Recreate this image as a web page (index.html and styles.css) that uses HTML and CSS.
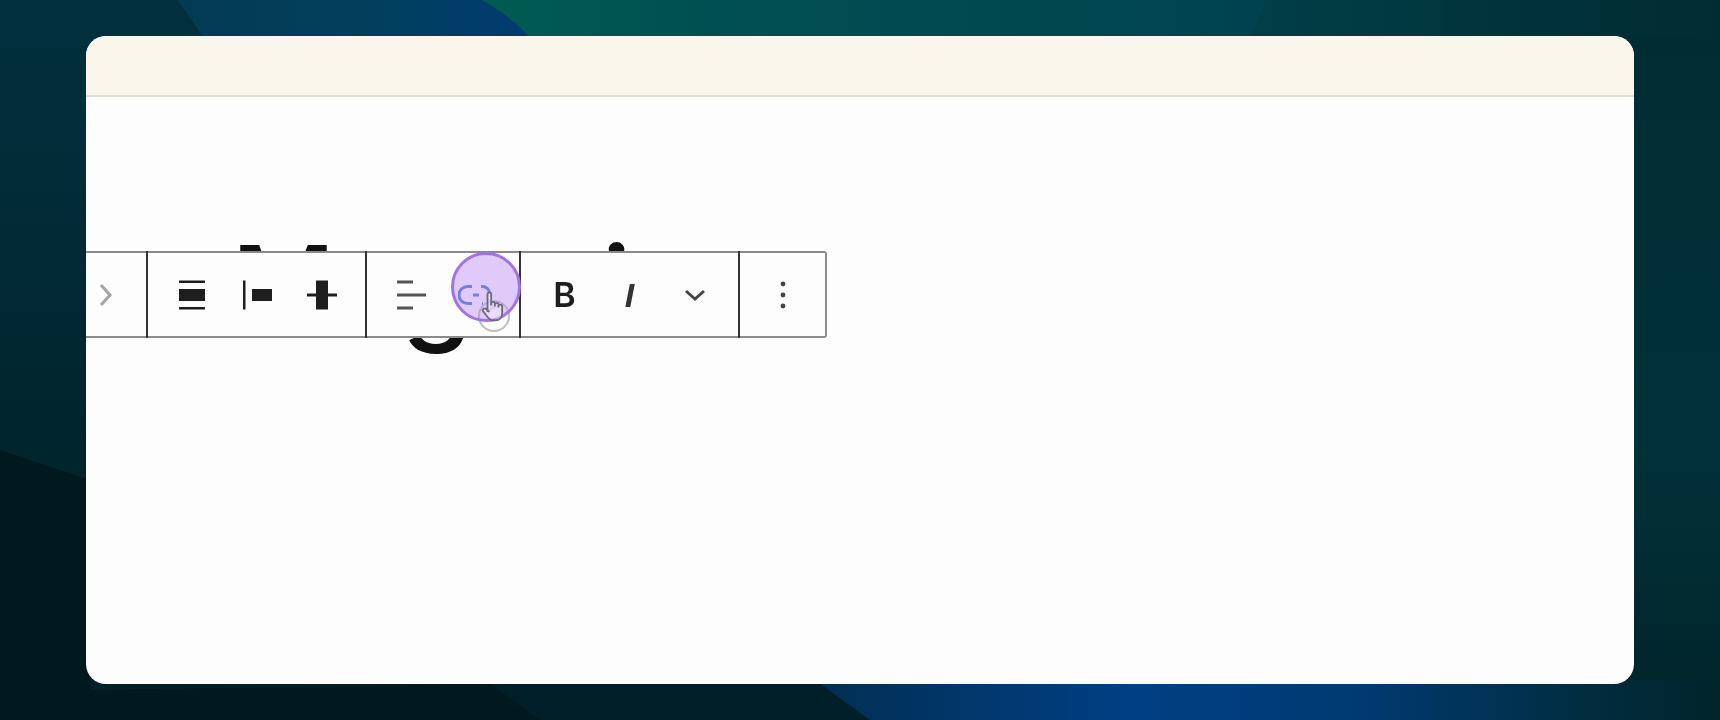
FILE: index.html
```html
<!DOCTYPE html>
<html lang="en">
<head>
    <meta charset="UTF-8">
    <meta name="viewport" content="width=device-width, initial-scale=1.0">
    <title>Block editor toolbar</title>
    <link rel="stylesheet" href="styles.css">
</head>
<body>
    <svg class="backdrop" viewBox="0 0 1720 720" aria-hidden="true">
        <defs>
            <linearGradient id="bg-base" x1="0" y1="0" x2="0" y2="1">
                <stop offset="0" stop-color="#02303e"/>
                <stop offset="0.6" stop-color="#01252e"/>
                <stop offset="1" stop-color="#011f26"/>
            </linearGradient>
            <linearGradient id="bg-blue-top" x1="0" y1="0" x2="1" y2="0">
                <stop offset="0" stop-color="#033a52"/>
                <stop offset="0.6" stop-color="#02405f"/>
                <stop offset="1" stop-color="#003a72"/>
            </linearGradient>
            <linearGradient id="bg-green-top" x1="0" y1="0" x2="1" y2="0">
                <stop offset="0" stop-color="#005c52"/>
                <stop offset="0.3" stop-color="#004f52"/>
                <stop offset="0.8" stop-color="#004650"/>
                <stop offset="1" stop-color="#00434e"/>
            </linearGradient>
            <linearGradient id="bg-right-top" x1="0" y1="0" x2="1" y2="0">
                <stop offset="0" stop-color="#013e48"/>
                <stop offset="0.4" stop-color="#013840"/>
                <stop offset="0.41" stop-color="#01353d"/>
                <stop offset="1" stop-color="#012c33"/>
            </linearGradient>
            <linearGradient id="bg-right" x1="0" y1="0" x2="0" y2="1">
                <stop offset="0" stop-color="#012c33"/>
                <stop offset="0.6" stop-color="#023139"/>
                <stop offset="1" stop-color="#01242a"/>
            </linearGradient>
            <linearGradient id="bg-blue-bottom" x1="0" y1="0" x2="1" y2="0">
                <stop offset="0" stop-color="#022f52"/>
                <stop offset="0.35" stop-color="#003f84"/>
                <stop offset="0.6" stop-color="#003a72"/>
                <stop offset="0.85" stop-color="#012d40"/>
                <stop offset="1" stop-color="#01242a"/>
            </linearGradient>
        </defs>
        <rect width="1720" height="720" fill="url(#bg-base)"/>
        <polygon points="178,0 530,0 530,40 205,40" fill="url(#bg-blue-top)"/>
        <path d="M482 0 C500 10 520 25 532 40 L1250 40 L1266 0 Z" fill="url(#bg-green-top)"/>
        <polygon points="1266,0 1720,0 1720,40 1250,40" fill="url(#bg-right-top)"/>
        <rect x="1630" y="36" width="90" height="684" fill="url(#bg-right)"/>
        <polygon points="0,450 90,480 90,690 491,684 540,720 0,720" fill="#00191e"/>
        <polygon points="491,680 815,680 870,720 540,720" fill="#001f28"/>
        <polygon points="815,680 1720,680 1720,720 870,720" fill="url(#bg-blue-bottom)"/>
    </svg>

    <main class="window">
        <div class="topbar"></div>
        <div class="canvas">
            <h1 class="title">Magazine</h1>

            <div class="toolbar">
                <div class="group group-nav">
                    <button class="tool" type="button">
                        <svg class="icon" viewBox="0 0 30 30"><path class="stroke-light" d="M10 5l9 10-9 10"/></svg>
                    </button>
                </div>
                <div class="group">
                    <button class="tool" type="button">
                        <svg class="icon" viewBox="0 0 30 30"><path d="M2 .5h26V3H2zM2 9h26v12H2zM2 27h26v2.500H2z"/></svg>
                    </button>
                    <button class="tool" type="button">
                        <svg class="icon" viewBox="0 0 30 30"><path d="M1 .5h2.500v29H1zM10 9h20v12H10z"/></svg>
                    </button>
                    <button class="tool" type="button">
                        <svg class="icon" viewBox="0 0 30 30"><path d="M9 .5h12V13.500h9v3h-9v13H9v-13H0v-3h9z"/></svg>
                    </button>
                </div>
                <div class="group">
                    <button class="tool" type="button">
                        <svg class="icon icon-soft" viewBox="0 0 30 30"><path d="M1 .5h16v3H1zM1 13.500h29v3H1zM1 26.500h16v3H1z"/></svg>
                    </button>
                    <button class="tool" type="button">
                        <svg class="icon" viewBox="0 0 36 30"><path class="stroke-link" d="M14 6.500H9.500a8.500 8.500 0 0 0 0 17H14M15 15h6M23 6.500h1.500a7 7 0 0 1 7 7M24 23.500h1"/></svg>
                    </button>
                </div>
                <div class="group">
                    <button class="tool tool-text tool-bold" type="button">B</button>
                    <button class="tool tool-text tool-italic" type="button">I</button>
                    <button class="tool" type="button">
                        <svg class="icon" viewBox="0 0 30 30"><path class="stroke-dark" d="M6 11l9 8 9-8"/></svg>
                    </button>
                </div>
                <div class="group group-end">
                    <button class="tool" type="button">
                        <svg class="icon" viewBox="0 0 30 30"><circle class="dot" cx="15" cy="4" r="2.400"/><circle class="dot" cx="15" cy="15" r="2.400"/><circle class="dot" cx="15" cy="26" r="2.400"/></svg>
                    </button>
                </div>

                <span class="click-ring"></span>
                <span class="highlight"></span>
                <svg class="cursor" viewBox="0 0 26 36" aria-hidden="true">
                    <path d="M7 24V4.500a2 2 0 0 1 4 0V17M11 15a2 2 0 0 1 4 0v3M15 16a2 2 0 0 1 4 0v3M19 18a2 2 0 0 1 4 0v7c0 5-3 8-7 8h-3c-3 0-5-2-7-5l-4-5c-1-2 2-4 4-2l3 3"/>
                </svg>
            </div>
        </div>
    </main>
</body>
</html>
```

FILE: styles.css
```css
html, body {
    margin: 0;
    height: 100%;
}

body {
    position: relative;
    box-sizing: border-box;
    height: 720px;
    padding: 36px 86px;
    overflow: hidden;
    background-color: #01252e;
}

.backdrop {
    position: absolute;
    top: 0;
    left: 0;
    width: 1720px;
    height: 720px;
}

.window {
    position: relative;
    display: flex;
    flex-direction: column;
    height: 648px;
    border-radius: 20px;
    overflow: hidden;
    background-color: #fdfdfd;
}

.topbar {
    height: 59px;
    flex-shrink: 0;
    background-color: #faf6eb;
    border-bottom: 2px solid #dfdcd6;
}

.canvas {
    position: relative;
    flex: 1;
}

.title {
    margin: 0;
    padding: 122px 0 0 145px;
    font-family: Inter, sans-serif;
    font-size: 115px;
    font-weight: 500;
    line-height: 1.2;
    color: #111;
    filter: blur(0.4px);
}

.toolbar {
    position: absolute;
    top: 154px;
    left: 0;
    display: flex;
    height: 87px;
    box-sizing: border-box;
    background-color: #fdfdfd;
    border-top: 2px solid #8a8a8a;
    border-bottom: 2px solid #8a8a8a;
    border-right: 2px solid #8a8a8a;
    border-radius: 0 3px 3px 0;
}

.group {
    display: flex;
    align-items: center;
    padding: 0 11px;
    border-right: 2px solid #333;
    margin-top: -2px;
    margin-bottom: -2px;
}

.group-nav {
    width: 62px;
    box-sizing: border-box;
    padding: 0;
}

.group-nav .tool {
    width: 40px;
}

.group-end {
    border-right: none;
    padding: 0 10px;
}

.tool {
    display: flex;
    align-items: center;
    justify-content: center;
    width: 65px;
    height: 65px;
    padding: 0;
    border: none;
    background: none;
    color: #1e1e1e;
    filter: blur(0.5px);
}

.tool-text {
    font-size: 34px;
    line-height: 1;
}

.tool-bold {
    font-family: Inter, sans-serif;
    font-weight: 600;
}

.tool-italic {
    font-family: "Liberation Sans", sans-serif;
    font-style: italic;
    font-weight: 700;
    color: #333;
}

.icon {
    height: 30px;
    fill: #1e1e1e;
}

.icon-soft {
    fill: #555;
}

.stroke-light,
.stroke-dark,
.stroke-link {
    fill: none;
    stroke-width: 3;
}

.stroke-light {
    stroke: #a3a3a3;
}

.stroke-dark {
    stroke: #444;
}

.stroke-link {
    stroke: #3a78c8;
}

.dot {
    fill: #444;
}

.highlight {
    position: absolute;
    top: -1px;
    left: 365px;
    box-sizing: border-box;
    width: 70px;
    height: 70px;
    border: 3px solid #a273e2;
    border-radius: 50%;
    background-color: rgba(186, 140, 245, 0.45);
}

.click-ring {
    position: absolute;
    top: 47px;
    left: 392px;
    box-sizing: border-box;
    width: 32px;
    height: 32px;
    border: 2px solid #bdbdbd;
    border-radius: 50%;
}

.cursor {
    position: absolute;
    top: 37px;
    left: 395px;
    width: 24px;
    height: 33px;
    fill: rgba(255, 255, 255, 0.35);
    stroke: #6f6a78;
    stroke-width: 2;
}
```
